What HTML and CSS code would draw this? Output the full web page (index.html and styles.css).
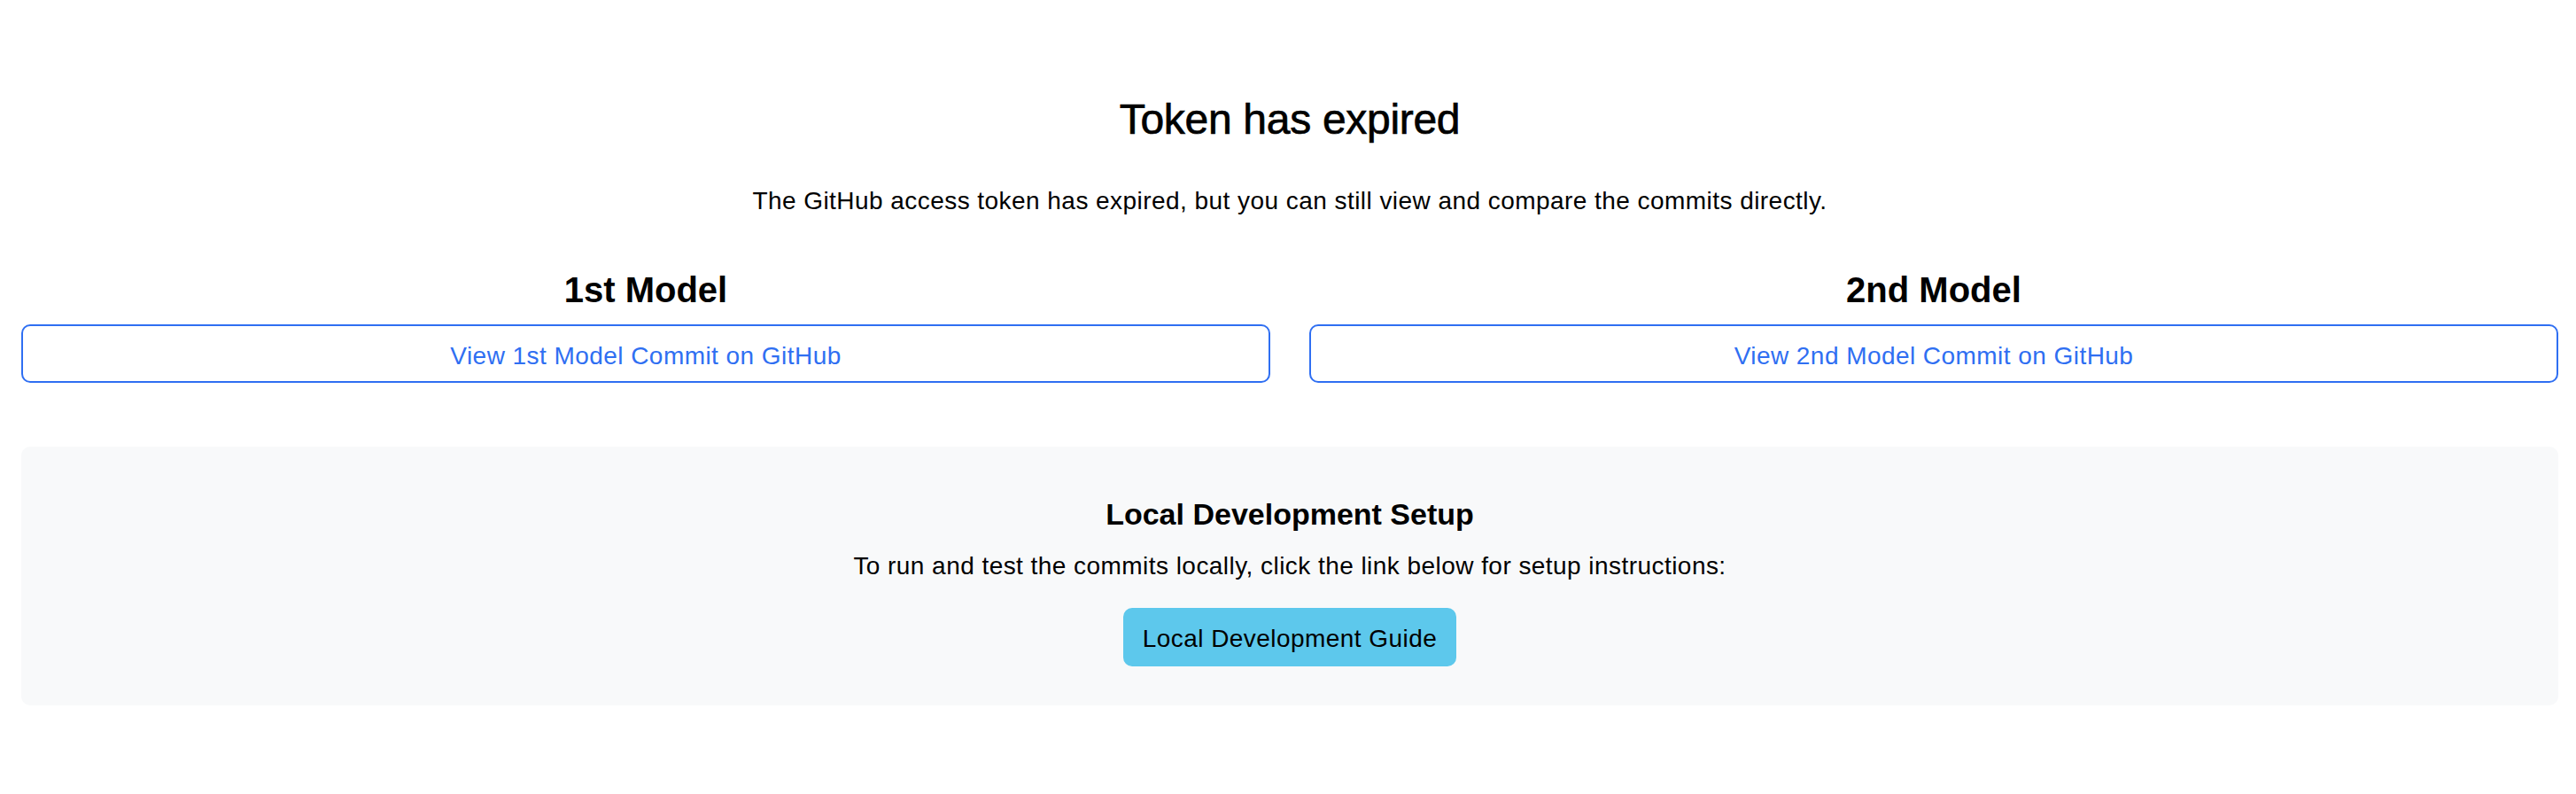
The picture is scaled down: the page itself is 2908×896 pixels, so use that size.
FILE: index.html
```html
<!DOCTYPE html>
<html lang="en">
<head>
<meta charset="utf-8">
<title>Token has expired</title>
<link rel="stylesheet" href="styles.css">
</head>
<body>
<main class="page">
  <h1 class="title">Token has expired</h1>
  <p class="lead">The GitHub access token has expired, but you can still view and compare the commits directly.</p>
  <div class="models">
    <section class="model">
      <h2 class="model-title">1st Model</h2>
      <a class="btn-outline" href="#">View 1st Model Commit on GitHub</a>
    </section>
    <section class="model">
      <h2 class="model-title">2nd Model</h2>
      <a class="btn-outline" href="#">View 2nd Model Commit on GitHub</a>
    </section>
  </div>
  <section class="setup">
    <h3 class="setup-title">Local Development Setup</h3>
    <p class="setup-text">To run and test the commits locally, click the link below for setup instructions:</p>
    <a class="btn-info" href="#">Local Development Guide</a>
  </section>
</main>
</body>
</html>
```

FILE: styles.css
```css
html, body {
  margin: 0;
  padding: 0;
  background: #ffffff;
}

body {
  font-family: "Liberation Sans", Arial, sans-serif;
  color: #111111;
}

.page {
  display: flex;
  flex-direction: column;
  padding: 106px 20px 0 24px;
}

.title {
  margin: 0;
  font-size: 48px;
  line-height: 58px;
  font-weight: 400;
  letter-spacing: -0.3px;
  -webkit-text-stroke: 0.7px #000;
  text-align: center;
  color: #000;
}

.lead {
  margin: 42px 0 0;
  font-size: 28px;
  line-height: 42px;
  letter-spacing: 0.45px;
  text-align: center;
  color: #000;
}

.models {
  margin-top: 54px;
  display: grid;
  grid-template-columns: 1fr 1fr;
  column-gap: 44px;
}

.model {
  display: flex;
  flex-direction: column;
}

.model-title {
  margin: 0;
  font-size: 40px;
  line-height: 50px;
  font-weight: 700;
  text-align: center;
  color: #000;
}

.btn-outline {
  display: block;
  margin-top: 14px;
  height: 66px;
  box-sizing: border-box;
  padding-top: 5px;
  border: 2px solid #2f6ff2;
  border-radius: 10px;
  font-size: 28px;
  line-height: 57px;
  letter-spacing: 0.45px;
  text-align: center;
  color: #2f6ff2;
  text-decoration: none;
}

.setup {
  margin-top: 72px;
  padding: 56px 0 44px;
  background: #f8f9fa;
  border-radius: 10px;
  display: flex;
  flex-direction: column;
  align-items: center;
}

.setup-title {
  margin: 0;
  font-size: 34px;
  line-height: 40px;
  font-weight: 700;
  color: #000;
}

.setup-text {
  margin: 18px 0 0;
  font-size: 28px;
  line-height: 42px;
  letter-spacing: 0.45px;
  color: #000;
}

.btn-info {
  margin-top: 26px;
  height: 66px;
  box-sizing: border-box;
  padding: 4px 22px 0;
  background: #5dc8ec;
  border-radius: 10px;
  font-size: 28px;
  line-height: 62px;
  letter-spacing: 0.45px;
  color: #000;
  text-decoration: none;
}
```
